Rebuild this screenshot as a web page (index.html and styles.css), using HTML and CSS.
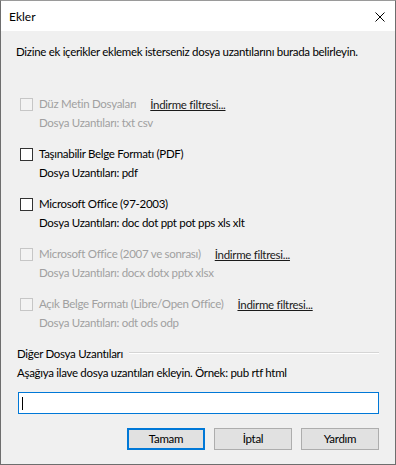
FILE: index.html
```html
<!DOCTYPE html>
<html lang="tr">
<head>
<meta charset="utf-8">
<title>Ekler</title>
<link rel="stylesheet" href="styles.css">
</head>
<body>
<div class="window">
  <div class="titlebar">
    <span class="title">Ekler</span>
    <span class="close">
      <svg width="10" height="10" viewBox="0 0 10 10"><path d="M0.5 0.5L9.5 9.5M9.5 0.5L0.5 9.5" stroke="#000" stroke-width="1" fill="none"/></svg>
    </span>
  </div>
  <div class="content">
    <p class="intro">Dizine ek içerikler eklemek isterseniz dosya uzantılarını burada belirleyin.</p>

    <div class="opt disabled">
      <div class="line"><span class="cb"></span><span class="lbl">Düz Metin Dosyaları</span><a class="link l1">İndirme filtresi...</a></div>
      <div class="sub">Dosya Uzantıları: txt csv</div>
    </div>

    <div class="opt">
      <div class="line"><span class="cb"></span><span class="lbl">Taşınabilir Belge Formatı (PDF)</span></div>
      <div class="sub">Dosya Uzantıları: pdf</div>
    </div>

    <div class="opt">
      <div class="line"><span class="cb"></span><span class="lbl">Microsoft Office (97-2003)</span></div>
      <div class="sub">Dosya Uzantıları: doc dot ppt pot pps xls xlt</div>
    </div>

    <div class="opt disabled">
      <div class="line"><span class="cb"></span><span class="lbl">Microsoft Office (2007 ve sonrası)</span><a class="link l2">İndirme filtresi...</a></div>
      <div class="sub">Dosya Uzantıları: docx dotx pptx xlsx</div>
    </div>

    <div class="opt disabled">
      <div class="line"><span class="cb"></span><span class="lbl">Açık Belge Formatı (Libre/Open Office)</span><a class="link l3">İndirme filtresi...</a></div>
      <div class="sub">Dosya Uzantıları: odt ods odp</div>
    </div>

    <div class="group">
      <span class="group-title">Diğer Dosya Uzantıları</span>
      <span class="group-rule"></span>
    </div>
    <p class="hint">Aşağıya ilave dosya uzantıları ekleyin. Örnek: pub rtf html</p>
    <div class="textbox"><span class="caret"></span></div>

    <div class="buttons">
      <span class="btn default">Tamam</span>
      <span class="btn">İptal</span>
      <span class="btn">Yardım</span>
    </div>
  </div>
</div>
</body>
</html>
```

FILE: styles.css
```css
* { box-sizing: border-box; }
html, body { margin: 0; padding: 0; }
body {
  font-family: "Lato", "Noto Sans", sans-serif;
  font-size: 11.5px;
  letter-spacing: -0.3px;
  color: #000;
  background: #f0f0f0;
}
.window {
  width: 396px;
  height: 465px;
  border: 1px solid #6e6e6e;
  border-top-color: #9a9a9a;
  background: #f0f0f0;
  display: flex;
  flex-direction: column;
}
.titlebar {
  height: 30px;
  background: #fff;
  display: flex;
  align-items: center;
  justify-content: space-between;
  padding: 1px 10px 0 8px;
}
.title { font-size: 12px; line-height: 16px; letter-spacing: 0; }
.close { display: flex; width: 10px; height: 10px; }
.content {
  padding: 12px 16px 0 15px;
  display: flex;
  flex-direction: column;
}
.intro { margin: 0; line-height: 18px; white-space: nowrap; }
.opt { margin-left: 4px; margin-top: 13px; }
.opt:first-of-type { margin-top: 34px; }
.line { display: flex; align-items: center; height: 18px; }
.cb {
  width: 13px; height: 13px;
  border: 1px solid #333;
  background: #fff;
  margin-right: 6px;
  flex: none;
}
.lbl { line-height: 18px; white-space: nowrap; }
.sub { padding-left: 19px; line-height: 18px; margin-top: 1px; }
.disabled .lbl, .disabled .sub { color: #a0a0a0; }
.disabled .cb { border-color: #c6c6c6; background: #f3f3f3; }
.link { color: #1a1a1a; text-decoration: underline; margin-left: 14px; white-space: nowrap; }
.group {
  display: flex;
  align-items: center;
  margin-top: 12px;
  height: 18px;
  padding-left: 1px;
}
.group-title { white-space: nowrap; margin-right: 6px; }
.group-rule {
  flex: 1;
  height: 2px;
  border-top: 1px solid #d5d5d5;
  border-bottom: 1px solid #fff;
  margin-top: -1px;
}
.hint { margin: 2px 0 0 1px; line-height: 18px; }
.textbox {
  margin-top: 10px;
  margin-left: 2px;
  height: 22px;
  background: #fff;
  border: 1px solid #0078d7;
  display: flex;
  align-items: center;
  padding-left: 3px;
}
.caret { width: 1px; height: 13px; background: #000; }
.buttons {
  display: flex;
  justify-content: flex-end;
  gap: 9px;
  margin-top: 14px;
}
.btn {
  width: 78px;
  height: 22px;
  border: 1px solid #adadad;
  background: #e1e1e1;
  display: flex;
  align-items: center;
  justify-content: center;
  line-height: 16px;
}
.btn.default { border: 2px solid #0078d7; }
```
